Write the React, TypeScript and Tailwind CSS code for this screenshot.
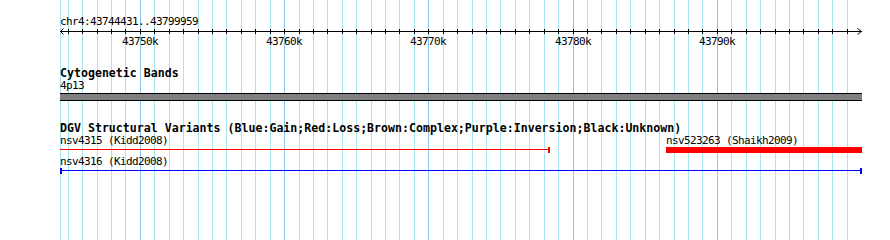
import React from 'react';

const START = 43744431;
const END = 43799959;
const LEFT = 60;
const SPAN = 801;
const px = (b: number) => Math.floor(LEFT + ((b - START) * SPAN) / (END - START));

// one tick every 1k, labelled every 10k
const ticks = Array.from({ length: 55 }, (_, i) => 43745000 + i * 1000);
const majors = ticks.filter((b) => b % 10000 === 0);

const mono = 'font-["DejaVu_Sans_Mono","Liberation_Mono",monospace] text-black';
const smallText = `${mono} text-[11px] tracking-[-0.62px] leading-[12.5px] whitespace-pre`;
const boldText = `${mono} text-[11.6px] font-bold whitespace-pre`;

export default function App() {
  return (
    <div className="relative w-[890px] h-[240px] overflow-hidden bg-white">
      <svg className="absolute inset-0" width={890} height={240} shapeRendering="crispEdges">
        <rect x={LEFT} y={0} width={1} height={240} fill="#a9e5ee" />
        {ticks.map((b) => (
          <rect key={b} x={px(b)} y={0} width={1} height={240} fill={b % 10000 === 0 ? '#8cc6ef' : '#a9e5ee'} />
        ))}
      </svg>

      <div className="relative flex flex-col pl-[60px] pt-[16px]">
        <div className={`h-[13px] ${smallText}`}>chr4:43744431..43799959</div>

        <svg width={802} height={7} className="overflow-visible" shapeRendering="crispEdges">
          <rect x={0} y={2} width={802} height={1} fill="#000" />
          {ticks.map((b) => (
            <rect key={b} x={px(b) - LEFT} y={0} width={1} height={5} fill="#000" />
          ))}
          <polyline points="3.5,-0.5 0.5,2.5 3.5,5.5" fill="none" stroke="#000" strokeWidth={1} shapeRendering="auto" />
          <polyline points="797.5,-0.5 801.5,2.5 797.5,5.5" fill="none" stroke="#000" strokeWidth={1} shapeRendering="auto" />
        </svg>

        <div className="relative h-[13px]">
          {majors.map((b) => (
            <span key={b} className={`absolute top-0 ${smallText}`} style={{ left: px(b) - LEFT - 18 }}>
              {b / 1000}k
            </span>
          ))}
        </div>

        <div className={`mt-[18px] h-[13px] leading-[13px] ${boldText}`}>Cytogenetic Bands</div>
        <div className={`h-[13px] ${smallText}`}>4p13</div>
        <div className="h-[8px] w-[802px] border-y border-black bg-[#808080]" />

        <div className={`mt-[20px] h-[14px] leading-[14px] ${boldText}`}>
          DGV Structural Variants (Blue:Gain;Red:Loss;Brown:Complex;Purple:Inversion;Black:Unknown)
        </div>
        <div className={`flex h-[12px] ${smallText}`}>
          <span className="w-[606px]">nsv4315 (Kidd2008)</span>
          <span>nsv523263 (Shaikh2009)</span>
        </div>
        <svg width={802} height={6} shapeRendering="crispEdges">
          <rect x={0} y={2} width={490} height={1} fill="#ff0000" />
          <rect x={488} y={0} width={2} height={6} fill="#ff0000" />
          <rect x={606} y={0} width={196} height={6} fill="#ff0000" />
        </svg>

        <div className={`mt-[3px] h-[12px] ${smallText}`}>nsv4316 (Kidd2008)</div>
        <svg width={802} height={6} shapeRendering="crispEdges">
          <rect x={0} y={2} width={802} height={1} fill="#0000ff" />
          <rect x={0} y={0} width={2} height={6} fill="#0000ff" />
          <rect x={800} y={0} width={2} height={6} fill="#0000ff" />
        </svg>
      </div>
    </div>
  );
}
